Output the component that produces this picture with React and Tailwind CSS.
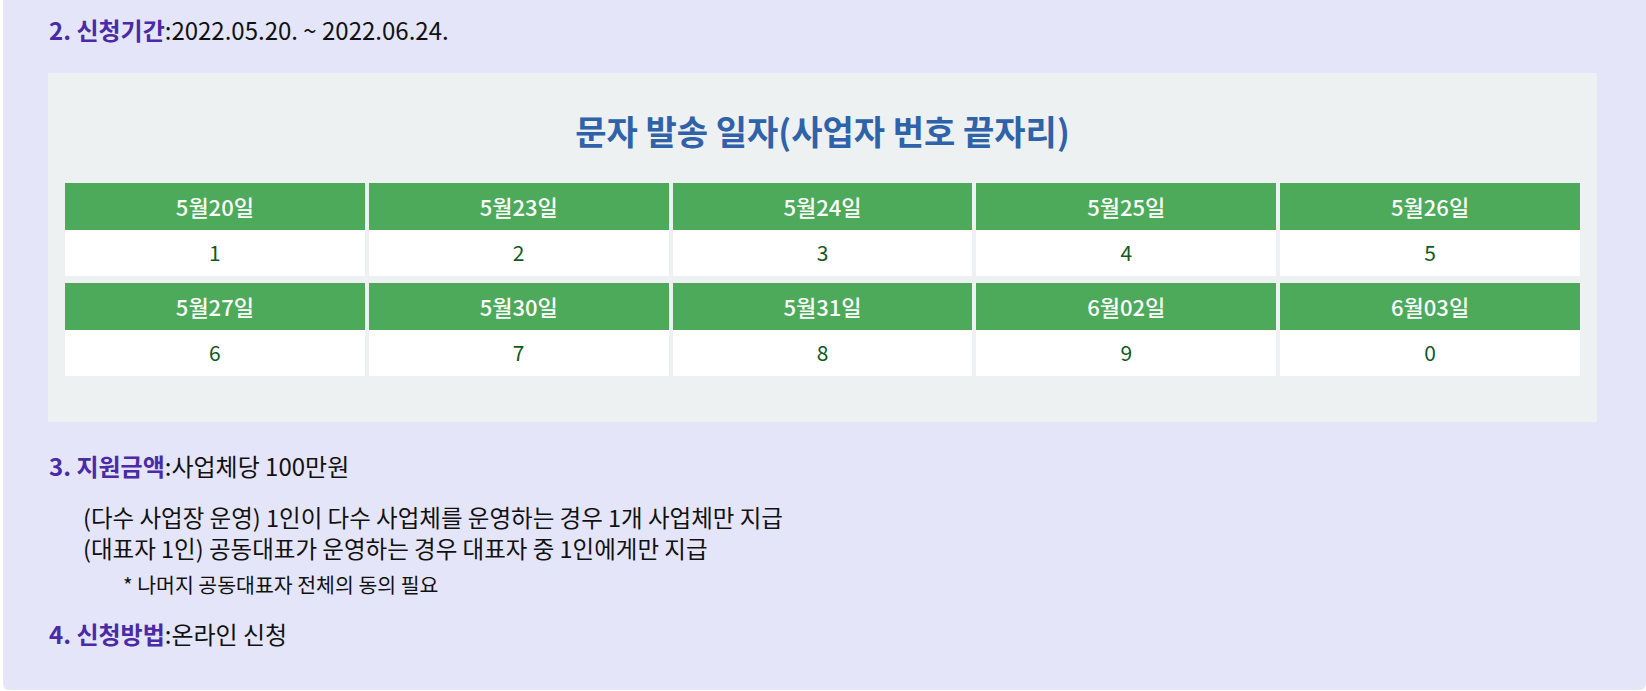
const FONT = { fontFamily: '"Noto Sans CJK KR", "Noto Sans", sans-serif' };

const schedule = [
  [
    { date: '5월20일', digit: '1' },
    { date: '5월23일', digit: '2' },
    { date: '5월24일', digit: '3' },
    { date: '5월25일', digit: '4' },
    { date: '5월26일', digit: '5' },
  ],
  [
    { date: '5월27일', digit: '6' },
    { date: '5월30일', digit: '7' },
    { date: '5월31일', digit: '8' },
    { date: '6월02일', digit: '9' },
    { date: '6월03일', digit: '0' },
  ],
];

function Label({ children }) {
  return <span className="font-bold text-[#4a2aa6]">{children}</span>;
}

function DayCell({ date, digit }) {
  return (
    <div className="flex flex-col">
      <div className="flex h-[47px] items-center justify-center bg-[#4caa5a] text-[22px] font-medium text-white">{date}</div>
      <div className="flex h-[46px] items-center justify-center bg-white text-[21px] text-[#0f5a1f]">{digit}</div>
    </div>
  );
}

export default function App() {
  return (
    <div className="min-h-screen bg-white" style={FONT}>
      <div className="ml-[3px] rounded-b-[6px] bg-[#e4e5f8] pb-[41px] pl-[45px] pr-[49px] pt-[15px] text-[#111]">
        <p className="pl-[1px] text-[24px] leading-[30px]">
          <Label>2. 신청기간</Label>:2022.05.20. ~ 2022.06.24.
        </p>

        <div className="mt-[28px] bg-[#edf1f2] px-[17px] pb-[46px] pt-[38px]">
          <h2 className="text-center text-[34px] font-bold leading-[40px] text-[#2f62a8]">문자 발송 일자(사업자 번호 끝자리)</h2>
          <div className="mt-[32px] flex flex-col gap-[7px]">
            {schedule.map((row, rowIndex) => (
              <div key={rowIndex} className="grid grid-cols-5 gap-x-[4px]">
                {row.map((cell) => (
                  <DayCell key={cell.date} date={cell.date} digit={cell.digit} />
                ))}
              </div>
            ))}
          </div>
        </div>

        <p className="mt-[29px] pl-[1px] text-[24px] leading-[30px]">
          <Label>3. 지원금액</Label>:사업체당 100만원
        </p>
        <div className="mt-[21px] pl-[35px] text-[23.5px] leading-[31px]">
          <p>(다수 사업장 운영) 1인이 다수 사업체를 운영하는 경우 1개 사업체만 지급</p>
          <p>(대표자 1인) 공동대표가 운영하는 경우 대표자 중 1인에게만 지급</p>
        </div>
        <p className="mt-[5px] pl-[75px] text-[20.5px] leading-[30px]">* 나머지 공동대표자 전체의 동의 필요</p>

        <p className="mt-[20px] pl-[1px] text-[24px] leading-[30px]">
          <Label>4. 신청방법</Label>:온라인 신청
        </p>
      </div>
    </div>
  );
}
